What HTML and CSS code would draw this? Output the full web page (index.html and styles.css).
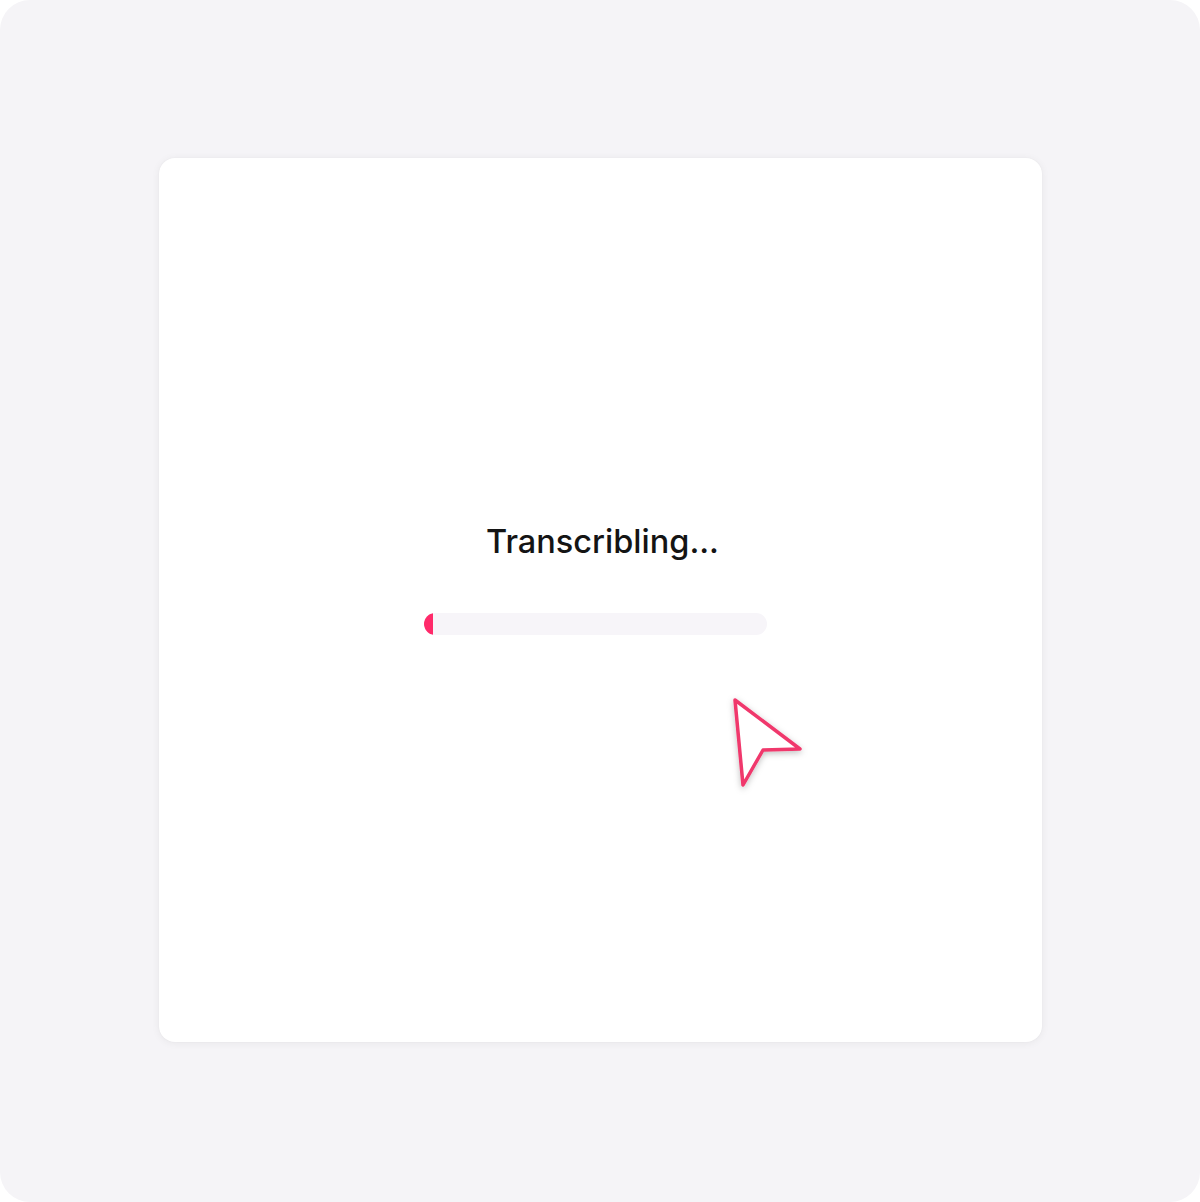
FILE: index.html
```html
<!DOCTYPE html>
<html>
<head>
<meta charset="utf-8">
<link rel="stylesheet" href="styles.css">
</head>
<body>
<div class="frame">
  <div class="card">
    <div class="status">
      <div class="title">Transcribling...</div>
      <div class="track"><div class="fill"></div></div>
    </div>
    <svg class="cursor" width="90" height="110" viewBox="0 0 90 110">
      <defs>
        <filter id="sh" x="-30%" y="-30%" width="160%" height="160%">
          <feDropShadow dx="0" dy="2" stdDeviation="3" flood-color="#000" flood-opacity="0.25"/>
        </filter>
      </defs>
      <path d="M10 10 L75 59 L38 60 L18 95 Z" fill="#fff" stroke="#f0386c" stroke-width="3.5" stroke-linejoin="round" filter="url(#sh)"/>
    </svg>
  </div>
</div>
</body>
</html>
```
FILE: styles.css
```css
html, body {
  margin: 0;
  padding: 0;
  background: #ffffff;
}
.frame {
  width: 1200px;
  height: 1202px;
  background: #f5f4f7;
  border-radius: 30px;
  display: flex;
  align-items: center;
  justify-content: center;
  box-sizing: border-box;
  padding: 0 0 2px 1px;
}
.card {
  position: relative;
  width: 883px;
  height: 884px;
  background: #ffffff;
  border-radius: 16px;
  box-shadow: 0 1px 8px rgba(0, 0, 0, 0.06), 0 0 2px rgba(0, 0, 0, 0.04);
  display: flex;
  align-items: center;
  justify-content: center;
}
.status {
  display: flex;
  flex-direction: column;
  align-items: center;
  gap: 52px;
  margin-top: -43px;
}
.title {
  font-family: Inter, "Liberation Sans", Arial, sans-serif;
  font-weight: 500;
  font-size: 32.5px;
  color: #141414;
  padding-left: 4px;
}
.track {
  width: 343px;
  height: 22px;
  border-radius: 11px;
  background: #f7f5f9;
  overflow: hidden;
  margin-left: -10px;
}
.fill {
  width: 9px;
  height: 100%;
  background: #ff2a6a;
  border-radius: 11px 0 0 11px;
}
.cursor {
  position: absolute;
  left: 566px;
  top: 532px;
}
```
